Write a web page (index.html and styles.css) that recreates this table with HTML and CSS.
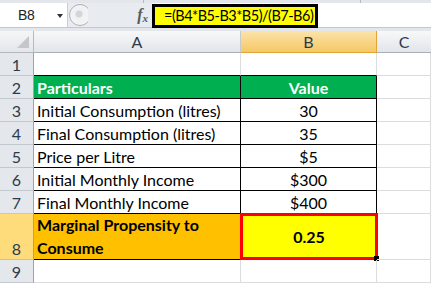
FILE: index.html
```html
<!DOCTYPE html>
<html>
<head>
<meta charset="utf-8">
<link rel="stylesheet" href="styles.css">
</head>
<body>
<div class="app">
  <div class="topstrip"><span class="tick t1"></span><span class="tick t2"></span></div>
  <div class="fbar">
    <div class="namebox"><span class="ref">B8</span><span class="caret"></span></div>
    <div class="splitter"><span class="knob"></span></div>
    <div class="fx"><span class="fx-f">f</span><span class="fx-x">x</span></div>
    <div class="farea"><div class="formula">=(B4*B5-B3*B5)/(B7-B6)</div></div>
  </div>
  <div class="gap"></div>
  <div class="sheet">
    <div class="corner"><span class="tri"></span></div>
    <div class="ch">A</div>
    <div class="ch sel">B</div>
    <div class="ch last">C</div>

    <div class="rh">1</div>
    <div class="c tb-b"></div>
    <div class="c tb-b"></div>
    <div class="c"></div>

    <div class="rh">2</div>
    <div class="c hd tb-r tb-b">Particulars</div>
    <div class="c hd ctr tb-r tb-b">Value</div>
    <div class="c"></div>

    <div class="rh">3</div>
    <div class="c tb-r tb-b">Initial Consumption (litres)</div>
    <div class="c ctr tb-r tb-b">30</div>
    <div class="c"></div>

    <div class="rh">4</div>
    <div class="c tb-r tb-b">Final Consumption (litres)</div>
    <div class="c ctr tb-r tb-b">35</div>
    <div class="c"></div>

    <div class="rh">5</div>
    <div class="c tb-r tb-b">Price per Litre</div>
    <div class="c ctr tb-r tb-b">$5</div>
    <div class="c"></div>

    <div class="rh">6</div>
    <div class="c tb-r tb-b">Initial Monthly Income</div>
    <div class="c ctr tb-r tb-b">$300</div>
    <div class="c"></div>

    <div class="rh">7</div>
    <div class="c tb-r tb-b">Final Monthly Income</div>
    <div class="c ctr tb-r tb-b">$400</div>
    <div class="c"></div>

    <div class="rh rsel">8</div>
    <div class="c res tb-r tb-b">Marginal Propensity to Consume</div>
    <div class="c active">0.25<span class="handle"></span></div>
    <div class="c"></div>

    <div class="rh">9</div>
    <div class="c"></div>
    <div class="c"></div>
    <div class="c"></div>
  </div>
</div>
</body>
</html>
```

FILE: styles.css
```css
html, body {
  margin: 0;
  padding: 0;
  background: #ffffff;
}
body {
  width: 431px;
  height: 284px;
  overflow: hidden;
  font-family: Lato, "Open Sans", sans-serif;
}
.app {
  display: flex;
  flex-direction: column;
}
.topstrip {
  height: 3px;
  background: #e3e6ea;
  position: relative;
}
.tick {
  position: absolute;
  top: 0;
  width: 1px;
  height: 3px;
  background: #b7bcc2;
}
.t1 { left: 143px; }
.t2 { left: 360px; }
.fbar {
  height: 25px;
  display: flex;
  background: #e8ebef;
  box-sizing: border-box;
  border-bottom: 1px solid #c3c8ce;
}
.namebox {
  width: 68px;
  background: #ffffff;
  display: flex;
  align-items: center;
  box-sizing: border-box;
  border-right: 1px solid #c9ced4;
}
.ref {
  font-family: "Liberation Sans", Arial, sans-serif;
  font-size: 14px;
  color: #222;
  margin-left: 18px;
  letter-spacing: -0.3px;
}
.caret {
  width: 0;
  height: 0;
  border-left: 3px solid transparent;
  border-right: 3px solid transparent;
  border-top: 4px solid #333;
  margin-left: 22px;
  margin-top: 1px;
}
.splitter {
  width: 20px;
  display: flex;
  align-items: center;
  overflow: hidden;
}
.knob {
  width: 22px;
  height: 22px;
  border-radius: 50%;
  box-sizing: border-box;
  border: 1px solid #aeb3ba;
  background: radial-gradient(circle at 45% 45%, #d2d5d9 0 3px, #eef0f2 4px, #f6f7f8 100%);
  margin-left: 1px;
  flex: none;
}
.fx {
  width: 64px;
  display: flex;
  align-items: center;
  justify-content: flex-end;
  padding-right: 4px;
  box-sizing: border-box;
  font-family: "Liberation Serif", serif;
  font-style: italic;
  font-weight: bold;
  color: #5a5a5a;
}
.fx-f {
  font-size: 16px;
  line-height: 16px;
}
.fx-x {
  font-size: 11px;
  line-height: 11px;
  margin-top: 6px;
  margin-left: 0;
}
.farea {
  flex: 1;
  background: #ffffff;
  display: flex;
  align-items: flex-start;
  padding-top: 1px;
}
.formula {
  width: 166px;
  height: 24px;
  box-sizing: border-box;
  background: #ffff00;
  border: 3px solid #000;
  font-family: Lato, sans-serif;
  font-size: 14.5px;
  letter-spacing: -0.5px;
  line-height: 18px;
  padding-left: 9px;
  color: #000;
  white-space: nowrap;
}
.gap {
  height: 3px;
  background: #e3e6ea;
}
.sheet {
  display: grid;
  grid-template-columns: 34px 207px 136px 54px;
  grid-template-rows: 22px repeat(7, 23px) 46px 23px;
}
.corner {
  background: linear-gradient(#f5f6f7, #e3e6ea);
  border-right: 1px solid #b5bac1;
  border-bottom: 1px solid #b5bac1;
  position: relative;
}
.tri {
  position: absolute;
  right: 4px;
  bottom: 4px;
  width: 0;
  height: 0;
  border-left: 12px solid transparent;
  border-bottom: 12px solid #c3c6ca;
}
.ch {
  background: linear-gradient(#f7f8f9, #e2e5e9);
  border-right: 1px solid #c6cacf;
  border-bottom: 1px solid #a9afb6;
  display: flex;
  align-items: center;
  justify-content: center;
  font-family: Lato, sans-serif;
  font-size: 16px;
  color: #2b3a4d;
}
.ch.sel {
  background: linear-gradient(#fbe3a9, #f5c865);
  border-right: 1px solid #e0a43a;
  border-bottom: 1px solid #e0a43a;
}
.ch.last { border-right: 0; }
.rh {
  background: #e4e7eb;
  border-right: 1px solid #9ea4ab;
  border-bottom: 1px solid #c3c8ce;
  display: flex;
  align-items: flex-end;
  justify-content: center;
  font-family: Lato, sans-serif;
  font-size: 16px;
  color: #2b3a4d;
  line-height: 21px;
}
.rh.rsel {
  background: #fedb7b;
  border-bottom-color: #e8c060;
}
.c {
  border-right: 1px solid #dadcdd;
  border-bottom: 1px solid #dadcdd;
  display: flex;
  align-items: flex-end;
  font-size: 16px;
  line-height: 21px;
  color: #000;
  padding-left: 3px;
  white-space: nowrap;
  position: relative;
}
.ctr {
  justify-content: center;
  padding-left: 0;
}
.tb-r { border-right-color: #000; }
.tb-b { border-bottom-color: #000; }
.hd {
  background: #00b050;
  color: #ffffff;
  font-weight: bold;
}
.res {
  background: #ffc000;
  font-weight: bold;
  white-space: normal;
  line-height: 23px;
  padding-right: 40px;
}
.active {
  background: #ffff00;
  border: 3px solid #ff0000;
  margin: -1px -1px 0 -1px;
  justify-content: center;
  align-items: center;
  font-weight: bold;
  padding-left: 0;
}
.handle {
  position: absolute;
  right: -4px;
  bottom: -4px;
  width: 5px;
  height: 5px;
  background: #000;
}
```
